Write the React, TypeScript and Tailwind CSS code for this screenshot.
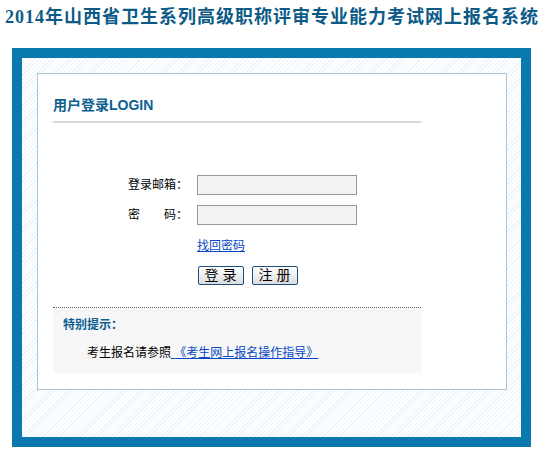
import React from "react";

const App: React.FC = () => {
  return (
    <div className="w-[549px] h-[457px] bg-white overflow-hidden font-['Liberation_Sans','Noto_Sans_CJK_SC',sans-serif] text-black">
      {/* Title */}
      <h1 className="pl-[5px] pt-[6px] h-[48px] text-[18px] leading-[22px] font-bold tracking-[1px] text-[#0c5b86] whitespace-nowrap font-['Liberation_Serif','Noto_Sans_CJK_SC',serif]">
        2014年山西省卫生系列高级职称评审专业能力考试网上报名系统
      </h1>

      {/* Frame */}
      <div className="ml-[12px] w-[519px] h-[399px] border-[10px] border-[#0a7aae] pt-[15px] pl-[15px] bg-[repeating-linear-gradient(135deg,#ebf2fa_0px,#ebf2fa_1px,#ffffff_1px,#ffffff_3px)]">
        <div className="w-[470px] h-[317px] border border-[#a9c4d2] bg-white pl-[15px] pt-[21px]">
          <div className="w-[368px] border-b-2 border-[#d9d9d9] pb-[6px]">
            <h2 className="text-[14px] leading-[20px] font-bold text-[#0b6091]">用户登录LOGIN</h2>
          </div>

          {/* Form */}
          <div className="mt-[52px] grid grid-cols-[135px_160px] gap-x-[9px] text-[12px] leading-[20px]">
            <div className="text-right h-[20px]">登录邮箱：</div>
            <input className="w-[160px] h-[20px] bg-[#f3f3f3] border border-[#999999] outline-none" />
            <div className="mt-[10px] text-right h-[20px]">密　　码：</div>
            <input type="password" className="mt-[10px] w-[160px] h-[20px] bg-[#f3f3f3] border border-[#999999] outline-none" />
            <div />
            <div className="mt-[12px] h-[18px] leading-[18px]">
              <a href="#" className="text-[#0848c6] underline">找回密码</a>
            </div>
            <div />
            <div className="mt-[11px] flex gap-[8px] pl-[1px]">
              <button className="w-[46px] h-[19px] rounded-[2px] border border-[#1d4e7c] bg-gradient-to-b from-white to-[#dcdcdc] text-[14px] leading-[17px] tracking-[4px] pl-[3px]">
                登录
              </button>
              <button className="w-[46px] h-[19px] rounded-[2px] border border-[#1d4e7c] bg-gradient-to-b from-white to-[#dcdcdc] text-[14px] leading-[17px] tracking-[4px] pl-[3px]">
                注册
              </button>
            </div>
          </div>

          {/* Notice */}
          <div className="mt-[22px] w-[368px] h-[66px] border-t border-dotted border-[#666666] bg-[#f7f7f7] pl-[10px] pt-[9px] text-[12px] leading-[16px]">
            <div className="font-bold text-[#0b6091]">特别提示：</div>
            <div className="mt-[12px] pl-[24px]">
              考生报名请参照
              <a href="#" className="text-[#0848c6] underline">
                {" "}《考生网上报名操作指导》{" "}
              </a>
            </div>
          </div>
        </div>
      </div>
    </div>
  );
};

export default App;
